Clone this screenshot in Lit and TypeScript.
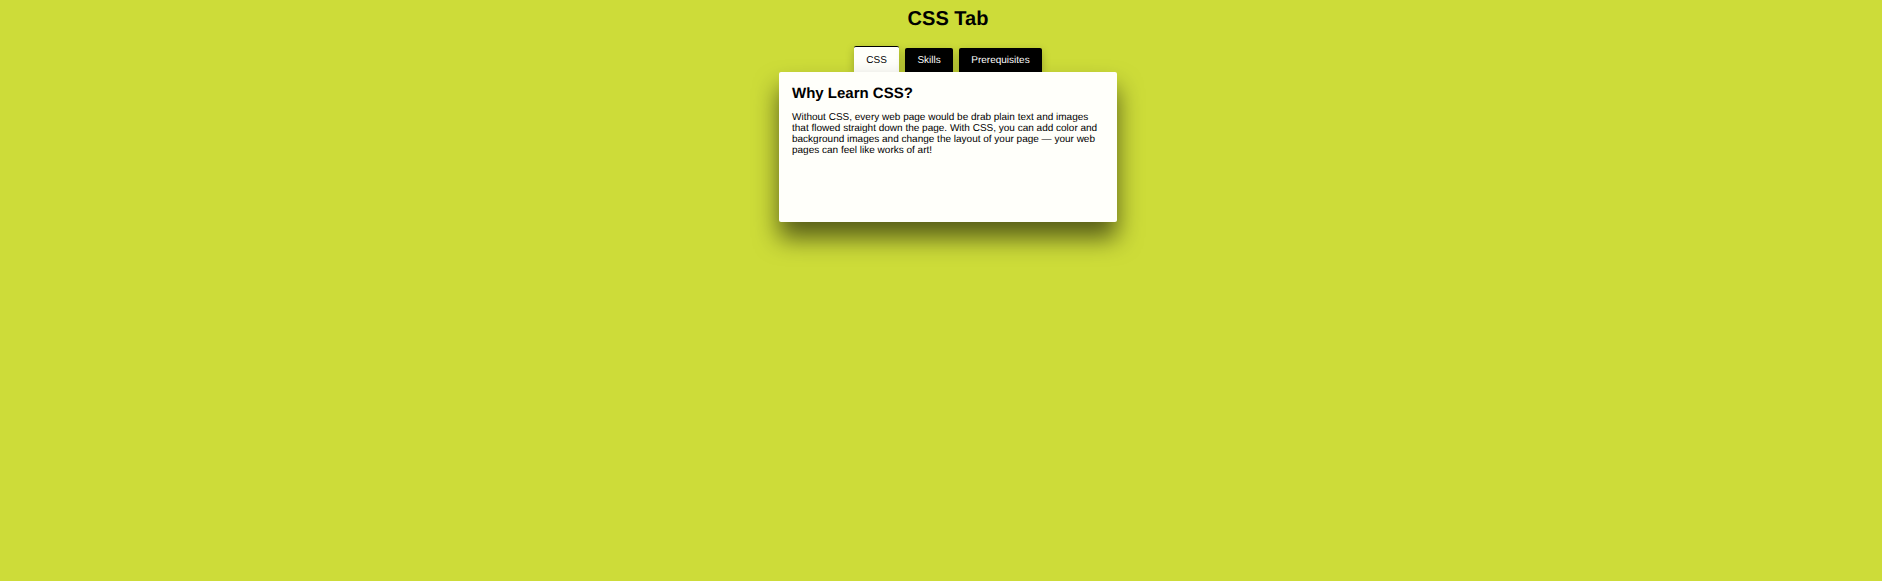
import { LitElement, html, css } from "lit";
import { customElement } from "lit/decorators.js";

@customElement("app-root")
export class AppRoot extends LitElement {
  static styles = css`
    :host {
      display: block;
      min-height: 581px;
      background: #cddc39;
      font-family: "Liberation Sans", Arial, sans-serif;
      text-rendering: geometricPrecision;
      color: #000;
      padding-left: 14px;
      box-sizing: border-box;
    }
    h1 {
      margin: 0;
      padding-top: 8px;
      font-size: 20px;
      line-height: 23px;
      font-weight: 700;
      text-align: center;
    }
    .wrap {
      display: flex;
      flex-direction: column;
      align-items: center;
      margin-top: 15px;
    }
    .tabs {
      display: flex;
      align-items: flex-end;
      gap: 5.5px;
      height: 26px;
    }
    .tab {
      box-sizing: border-box;
      height: 24px;
      padding: 0 12.5px;
      display: flex;
      align-items: center;
      justify-content: center;
      font-size: 10px;
      background: #000;
      color: #fff;
      border-radius: 2px 2px 0 0;
      box-shadow: 0 3px 8px rgba(0, 0, 0, 0.25);
    }
    .tab.active {
      height: 26px;
      padding-top: 1px;
      background: #fffffa;
      color: #000;
      border-top: 1px solid #000;
    }
    .card {
      box-sizing: border-box;
      width: 338px;
      height: 150px;
      padding: 13px 13px;
      background: #fffffa;
      border-radius: 2px;
      box-shadow: 0 16px 24px rgba(0, 0, 0, 0.58);
      position: relative;
    }
    h2 {
      margin: 0;
      font-size: 15px;
      line-height: 17px;
      font-weight: 700;
    }
    p {
      margin: 10px 0 0;
      font-size: 10px;
      line-height: 11px;
    }
  `;

  render() {
    return html`
      <h1>CSS Tab</h1>
      <div class="wrap">
        <div class="tabs">
          <div class="tab active">CSS</div>
          <div class="tab">Skills</div>
          <div class="tab">Prerequisites</div>
        </div>
        <div class="card">
          <h2>Why Learn CSS?</h2>
          <p>
            Without CSS, every web page would be drab plain text and images that
            flowed straight down the page. With CSS, you can add color and
            background images and change the layout of your page — your web
            pages can feel like works of art!
          </p>
        </div>
      </div>
    `;
  }
}
